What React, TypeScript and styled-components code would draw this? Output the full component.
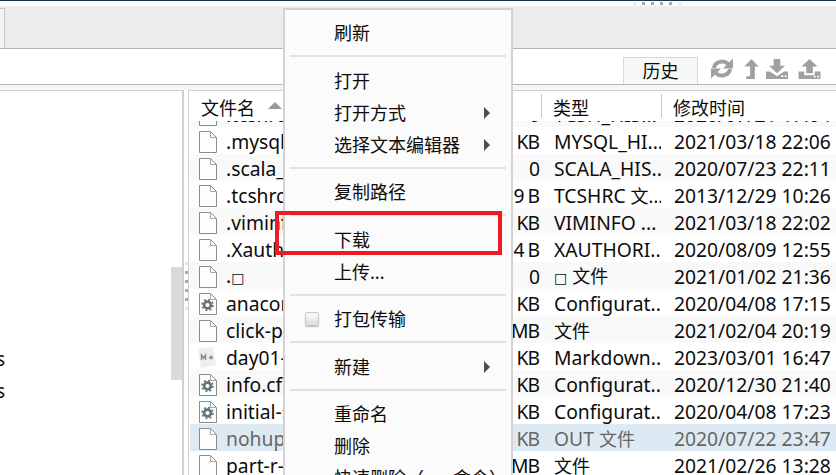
import React from "react";
import styled, { createGlobalStyle } from "styled-components";

const Global = createGlobalStyle`
  html, body { margin: 0; padding: 0; background: #fff; }
  body { font-family: "Noto Sans", "Noto Sans CJK SC", sans-serif; color: #0c0c0c; }
`;

const Page = styled.div`
  position: relative;
  width: 836px;
  height: 475px;
  overflow: hidden;
  background: #fff;
  display: flex;
  flex-direction: column;
`;
const TopLine = styled.div`
  height: 1px;
  background: #12344d;
  flex: none;
`;
const TopGap = styled.div`
  height: 5px;
  background: #fcfcfc;
  flex: none;
`;
const TabBar = styled.div`
  height: 42px;
  flex: none;
  background: #ececec;
  border-bottom: 1px solid #b4b4b4;
  display: flex;
  align-items: flex-end;
`;
const Tab = styled.div`
  width: 4px;
  height: 39px;
  background: #f4f4f4;
  border-right: 1px solid #c4c4c4;
  border-top: 1px solid #c4c4c4;
`;
const Toolbar = styled.div`
  height: 35px;
  flex: none;
  border-bottom: 1px solid #b4b4b4;
  display: flex;
  align-items: flex-end;
  justify-content: flex-end;
  padding-right: 15px;
`;
const HistoryBtn = styled.div`
  width: 75px;
  height: 27px;
  box-sizing: border-box;
  background: #f7f7f7;
  border: 1px solid #d8d8d8;
  border-bottom: none;
  font-size: 18px;
  line-height: 27px;
  text-align: center;
`;
const IconSlot = styled.div<{ $gap: number }>`
  height: 31px;
  margin-left: ${(p) => p.$gap}px;
  display: flex;
  align-items: center;
  color: #a0a0a0;
`;
const Body = styled.div`
  flex: 1;
  display: flex;
  padding-top: 5px;
  background: #f6f6f6;
  min-height: 0;
`;
const LeftPanel = styled.div`
  width: 184px;
  flex: none;
  background: #fff;
  border-top: 1px solid #cfcfcf;
  border-right: 2px solid #cfcfcf;
  box-sizing: border-box;
  display: flex;
  justify-content: space-between;
`;
const TreeText = styled.div`
  padding-top: 252px;
  font-size: 19px;
  line-height: 32px;
  width: 5px;
  overflow: hidden;
  direction: rtl;
`;
const TreeScroll = styled.div`
  width: 11px;
  height: 113px;
  margin-top: 176px;
  background: #dadada;
`;
const Splitter = styled.div`
  width: 4px;
  flex: none;
  background: #fff;
  display: flex;
  flex-direction: column;
  align-items: center;
  gap: 6px;
  padding-top: 172px;
  box-sizing: border-box;
`;
const SplitDot = styled.i<{ $faint?: boolean }>`
  width: 3px;
  height: 3px;
  background: ${(p) => (p.$faint ? "#e6e6e6" : "#a8a8a8")};
`;
const Files = styled.div`
  flex: 1;
  min-width: 0;
  background: #fff;
  border-top: 1px solid #cfcfcf;
  border-left: 1px solid #cfcfcf;
  display: flex;
  flex-direction: column;
  padding-left: 1px;
`;
const HeaderRow = styled.div`
  height: 30px;
  flex: none;
  display: grid;
  grid-template-columns: 351px 120px 1fr;
  font-size: 18px;
`;
const HeaderCell = styled.div`
  padding-left: 11px;
  padding-top: 2px;
  height: 28px;
  display: flex;
  align-items: center;
  gap: 13px;
`;
const DividedHeaderCell = styled(HeaderCell)`
  border-left: 1px solid #c8c8c8;
  margin-top: 3px;
  height: 22px;
`;
const SortArrow = styled.i`
  width: 0;
  height: 0;
  margin-bottom: 3px;
  border-left: 7px solid transparent;
  border-right: 7px solid transparent;
  border-bottom: 7px solid #9a9a9a;
`;
const Rows = styled.div`
  margin-top: -21px;
`;
const Clip = styled.div`
  flex: 1;
  min-height: 0;
  overflow: hidden;
`;
const Row = styled.div<{ $bg: string; $muted?: boolean }>`
  height: 27px;
  box-sizing: border-box;
  padding-top: 2px;
  display: grid;
  grid-template-columns: 28px 260px 63px 120px 1fr;
  align-items: center;
  font-size: 19.3px;
  line-height: 25px;
  white-space: nowrap;
  background: ${(p) => p.$bg};
  color: ${(p) => (p.$muted ? "#666" : "#0c0c0c")};
`;
const FileIconBox = styled.div`
  display: flex;
  align-items: center;
  padding-left: 9px;
`;
const Name = styled.div`
  padding-left: 8px;
  overflow: hidden;
`;
const Size = styled.div`
  text-align: right;
  padding-right: 2px;
  letter-spacing: -1px;
`;
const KindCell = styled.div`
  padding-left: 13px;
  overflow: hidden;
`;
const Time = styled.div`
  padding-left: 13px;
`;
const Cjk = styled.span`
  font-size: 18px;
`;
const Tofu = styled.span`
  font-family: "DejaVu Sans", sans-serif;
  font-size: 14px;
`;
const Menu = styled.div`
  position: absolute;
  left: 283px;
  top: 8px;
  width: 230px;
  height: 480px;
  box-sizing: border-box;
  background: #fbfbfb;
  border: 2px solid #d2d2d2;
  padding: 7px 5px 0;
  font-size: 18px;
  line-height: 32px;
  display: flex;
  flex-direction: column;
`;
const MenuItem = styled.div`
  height: 32px;
  flex: none;
  position: relative;
  padding-left: 44px;
  white-space: nowrap;
`;
const SubArrow = styled.i`
  position: absolute;
  right: 16px;
  top: 10px;
  width: 0;
  height: 0;
  border-top: 6px solid transparent;
  border-bottom: 6px solid transparent;
  border-left: 6px solid #4c4c4c;
`;
const Separator = styled.div`
  height: 2px;
  flex: none;
  background: #e2e2e2;
  margin: 6px 0 7.5px;
`;
const Check = styled.i`
  position: absolute;
  left: 15px;
  top: 9px;
  width: 14px;
  height: 14px;
  box-sizing: border-box;
  border: 1px solid #c8c8c8;
  border-radius: 2px;
  background: linear-gradient(#fafafa, #dedede);
  box-shadow: 0 1px 1px #bbb;
`;
const RedBox = styled.div`
  position: absolute;
  left: 275px;
  top: 211px;
  width: 227px;
  height: 44px;
  box-sizing: border-box;
  border: 4px solid #ed1c24;
`;
const TopDots = styled.div`
  position: absolute;
  top: 2px;
  left: 633px;
  display: flex;
  gap: 6px;
`;
const TopDot = styled.i<{ $faint?: boolean }>`
  width: 3px;
  height: 3px;
  background: ${(p) => (p.$faint ? "#e8e8e8" : "#a6a6a6")};
`;

const PlainFile = () => (
  <svg width="18" height="22" viewBox="0 0 18 22">
    <path d="M.5.5h11l6 6v15H.5z" fill="#fdfdfd" stroke="#8c8c8c" />
    <path d="M11.5.5v6h6" fill="none" stroke="#a8a8a8" />
  </svg>
);
const GearFile = () => (
  <svg width="18" height="22" viewBox="0 0 18 22">
    <path d="M.5.5h11l6 6v15H.5z" fill="#fdfdfd" stroke="#8c8c8c" />
    <path d="M11.5.5v6h6" fill="none" stroke="#a8a8a8" />
    <circle cx="8.500" cy="12" r="3.400" fill="none" stroke="#5f7480" strokeWidth="2.600" />
    <circle cx="8.500" cy="12" r="5.400" fill="none" stroke="#5f7480" strokeWidth="1.600" strokeDasharray="2 2.240" />
  </svg>
);
const MdFile = () => (
  <svg width="20" height="23" viewBox="0 0 20 23" style={{ marginLeft: -2 }}>
    <path d="M1 3l15-2 3 18-15 3z" fill="#eeeeee" />
    <path d="M4.500 14v-5l2 3 2-3v5M12 11.500h4M14 9.500v4" fill="none" stroke="#8a8a8a" strokeWidth="1.400" />
  </svg>
);
const Refresh = () => (
  <svg width="22" height="21" viewBox="0 0 24 22" fill="none" stroke="currentColor" strokeWidth="4.400">
    <path d="M3.200 10.500a9 8.200 0 0 1 15.500-4.500" />
    <path d="M20.800 11.500a9 8.200 0 0 1-15.500 4.500" />
    <path d="M24 0v11h-11zM0 22v-11h11z" fill="currentColor" stroke="none" />
  </svg>
);
const UpArrow = () => (
  <svg width="15" height="20" viewBox="0 0 15 21" fill="currentColor">
    <path d="M7.500 0L15 8h-4v13H2v-3h4V8H0z" />
  </svg>
);
const Download = () => (
  <svg width="22" height="20" viewBox="0 0 23 21" fill="currentColor">
    <path d="M8 0h7v7h5l-8.500 8L3 7h5z" />
    <path d="M0 13h4l7.500 5 7.500-5h4v8H0z" />
    <path d="M16 17h2v2h-2zM19.500 17h2v2h-2z" fill="#fff" />
  </svg>
);
const Upload = () => (
  <svg width="23" height="20" viewBox="0 0 23 21" fill="currentColor">
    <path d="M11.500 0L20 8h-5v7H8V8H3z" />
    <path d="M0 13h6v4h11v-4h6v8H0z" />
    <path d="M16 17.500h2v2h-2zM19.500 17.500h2v2h-2z" fill="#fff" />
  </svg>
);

type IconKind = "plain" | "gear" | "md";
const files: { icon: IconKind; name: React.ReactNode; size: string; kind: React.ReactNode; time: string; muted?: boolean }[] = [
  { icon: "plain", name: ".tcshrc", size: "0", kind: "TCSH_HIS...", time: "2020/07/21 17:04" },
  { icon: "plain", name: ".mysql_history", size: "KB", kind: "MYSQL_HI...", time: "2021/03/18 22:06" },
  { icon: "plain", name: ".scala_history", size: "0", kind: "SCALA_HIS...", time: "2020/07/23 22:11" },
  { icon: "plain", name: ".tcshrc", size: "9 B", kind: <>TCSHRC <Cjk>文...</Cjk></>, time: "2013/12/29 10:26" },
  { icon: "plain", name: ".viminfo", size: "KB", kind: "VIMINFO ...", time: "2021/03/18 22:02" },
  { icon: "plain", name: ".Xauthority", size: "4 B", kind: "XAUTHORI...", time: "2020/08/09 12:55" },
  { icon: "plain", name: <>.<Tofu>□</Tofu></>, size: "0", kind: <><Tofu>□</Tofu> <Cjk>文件</Cjk></>, time: "2021/01/02 21:36" },
  { icon: "gear", name: "anaconda.cfg", size: "KB", kind: "Configurat...", time: "2020/04/08 17:15" },
  { icon: "plain", name: "click-plugin", size: "MB", kind: <Cjk>文件</Cjk>, time: "2021/02/04 20:19" },
  { icon: "md", name: "day01-notes.md", size: "KB", kind: "Markdown...", time: "2023/03/01 16:47" },
  { icon: "gear", name: "info.cfg", size: "KB", kind: "Configurat...", time: "2020/12/30 21:40" },
  { icon: "gear", name: "initial-setup", size: "KB", kind: "Configurat...", time: "2020/04/08 17:23" },
  { icon: "plain", name: "nohup.out", size: "KB", kind: <>OUT <Cjk>文件</Cjk></>, time: "2020/07/22 23:47", muted: true },
  { icon: "plain", name: "part-r-00000", size: "MB", kind: <Cjk>文件</Cjk>, time: "2021/02/26 13:28" },
];

const icons = { plain: <PlainFile />, gear: <GearFile />, md: <MdFile /> };

export default function App() {
  return (
    <Page>
      <Global />
      <TopLine />
      <TopGap />
      <TabBar>
        <Tab />
      </TabBar>
      <Toolbar>
        <HistoryBtn>历史</HistoryBtn>
        <IconSlot $gap={13}><Refresh /></IconSlot>
        <IconSlot $gap={11}><UpArrow /></IconSlot>
        <IconSlot $gap={7}><Download /></IconSlot>
        <IconSlot $gap={10}><Upload /></IconSlot>
      </Toolbar>
      <Body>
        <LeftPanel>
          <TreeText>
            <div>s</div>
            <div>s</div>
          </TreeText>
          <TreeScroll />
        </LeftPanel>
        <Splitter>
          <SplitDot $faint />
          <SplitDot />
          <SplitDot />
          <SplitDot />
          <SplitDot />
          <SplitDot $faint />
        </Splitter>
        <Files>
          <HeaderRow>
            <HeaderCell>
              文件名
              <SortArrow />
            </HeaderCell>
            <DividedHeaderCell>类型</DividedHeaderCell>
            <DividedHeaderCell>修改时间</DividedHeaderCell>
          </HeaderRow>
          <Clip>
            <Rows>
              {files.map((f, i) => (
                <Row key={i} $bg={f.muted ? "#deeaf3" : i % 2 === 0 ? "#f9f9f9" : "#fff"} $muted={f.muted}>
                  <FileIconBox>{icons[f.icon]}</FileIconBox>
                  <Name>{f.name}</Name>
                  <Size>{f.size}</Size>
                  <KindCell>{f.kind}</KindCell>
                  <Time>{f.time}</Time>
                </Row>
              ))}
            </Rows>
          </Clip>
        </Files>
      </Body>
      <Menu>
        <MenuItem>刷新</MenuItem>
        <Separator />
        <MenuItem>打开</MenuItem>
        <MenuItem>打开方式<SubArrow /></MenuItem>
        <MenuItem>选择文本编辑器<SubArrow /></MenuItem>
        <Separator />
        <MenuItem>复制路径</MenuItem>
        <Separator />
        <MenuItem>下载</MenuItem>
        <MenuItem>上传...</MenuItem>
        <Separator />
        <MenuItem><Check />打包传输</MenuItem>
        <Separator />
        <MenuItem>新建<SubArrow /></MenuItem>
        <Separator />
        <MenuItem>重命名</MenuItem>
        <MenuItem>删除</MenuItem>
        <MenuItem>快速删除（rm 命令）</MenuItem>
      </Menu>
      <RedBox />
      <TopDots>
        <TopDot $faint />
        <TopDot />
        <TopDot />
        <TopDot />
        <TopDot />
        <TopDot $faint />
      </TopDots>
    </Page>
  );
}
